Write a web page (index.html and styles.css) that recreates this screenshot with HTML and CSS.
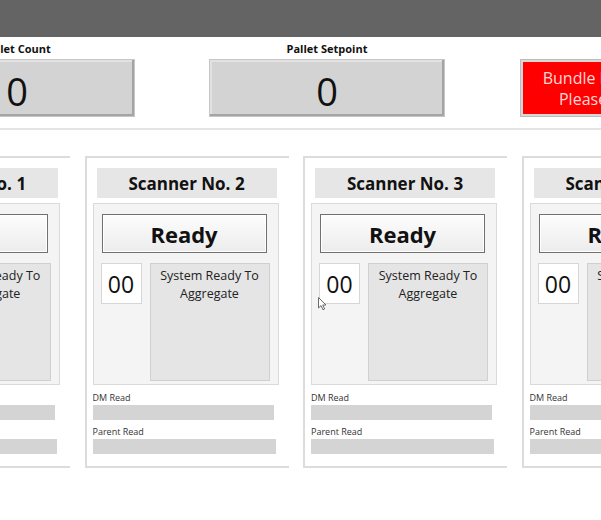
FILE: index.html
```html
<!DOCTYPE html>
<html>
<head>
<meta charset="utf-8">
<link rel="stylesheet" href="styles.css">
</head>
<body>
<div class="page">
  <div class="header"></div>
  <div class="top">
    <div class="stat">
      <div class="stat-label">Pallet Count</div>
      <div class="stat-box">0</div>
    </div>
    <div class="stat">
      <div class="stat-label">Pallet Setpoint</div>
      <div class="stat-box">0</div>
    </div>
    <div class="stat stat-alarm">
      <div class="stat-label"></div>
      <div class="stat-box alarm">Bundle Pallet Is Complete<br>Please Remove Pallet</div>
    </div>
  </div>
  <div class="divider"></div>
  <div class="cards">
    <div class="card">
      <div class="card-title">Scanner No. 1</div>
      <div class="panel">
        <div class="ready">Ready</div>
        <div class="status-row">
          <div class="count">00</div>
          <div class="message">System Ready To Aggregate</div>
        </div>
      </div>
      <div class="read-label">DM Read</div>
      <div class="read-bar dm"></div>
      <div class="read-label parent-label">Parent Read</div>
      <div class="read-bar parent"></div>
    </div>
    <div class="card">
      <div class="card-title">Scanner No. 2</div>
      <div class="panel">
        <div class="ready">Ready</div>
        <div class="status-row">
          <div class="count">00</div>
          <div class="message">System Ready To Aggregate</div>
        </div>
      </div>
      <div class="read-label">DM Read</div>
      <div class="read-bar dm"></div>
      <div class="read-label parent-label">Parent Read</div>
      <div class="read-bar parent"></div>
    </div>
    <div class="card">
      <div class="card-title">Scanner No. 3</div>
      <div class="panel">
        <div class="ready">Ready</div>
        <div class="status-row">
          <div class="count">00</div>
          <div class="message">System Ready To Aggregate</div>
        </div>
      </div>
      <div class="read-label">DM Read</div>
      <div class="read-bar dm"></div>
      <div class="read-label parent-label">Parent Read</div>
      <div class="read-bar parent"></div>
      <svg class="cursor" width="10" height="14" viewBox="0 0 10 14"><path d="M0.5 0.5 L0.5 11 L3 8.6 L5 12.8 L6.6 12 L4.7 8 L8 8 Z" fill="#ffffff" stroke="#6a6a6a" stroke-width="1" stroke-linejoin="round"/></svg>
    </div>
    <div class="card">
      <div class="card-title">Scanner No. 4</div>
      <div class="panel">
        <div class="ready">Ready</div>
        <div class="status-row">
          <div class="count">00</div>
          <div class="message">System Ready To Aggregate</div>
        </div>
      </div>
      <div class="read-label">DM Read</div>
      <div class="read-bar dm"></div>
      <div class="read-label parent-label">Parent Read</div>
      <div class="read-bar parent"></div>
    </div>
  </div>
</div>
</body>
</html>
```

FILE: styles.css
```css
html, body {
  margin: 0;
  padding: 0;
  overflow: hidden;
  background: #ffffff;
  font-family: "Open Sans", "Noto Sans", sans-serif;
  color: #111111;
}

.page {
  width: 601px;
  height: 520px;
  overflow: hidden;
  position: relative;
}

.header {
  height: 37px;
  background: #646464;
}

.top {
  display: grid;
  grid-template-columns: 236px 236px 236px;
  column-gap: 74px;
  margin-left: -101px;
  padding-top: 4px;
  width: max-content;
}

.stat {
  display: flex;
  flex-direction: column;
  align-items: center;
}

.stat-alarm {
  margin-left: 2px;
}

.stat-label {
  font-size: 11px;
  font-weight: 700;
  line-height: 16px;
  height: 18px;
  color: #111111;
  white-space: nowrap;
}

.stat-box {
  width: 236px;
  height: 58px;
  box-sizing: border-box;
  background: #d3d3d3;
  border: 1px solid #c6c6c6;
  box-shadow: inset -2px -2px 0 #a4a4a4, inset 2px 2px 0 #e2e2e2;
  display: flex;
  align-items: center;
  justify-content: center;
  font-size: 38px;
  padding-top: 5px;
  color: #111111;
}

.stat-box.alarm {
  background: #ff0000;
  border: 1px solid #bdbdbd;
  box-shadow: inset 0 0 0 2px #d8d8d8;
  color: #ffd8d8;
  font-size: 16px;
  line-height: 21px;
  text-align: center;
  white-space: nowrap;
  padding-top: 2px;
}

.divider {
  height: 2px;
  background: #e4e4e4;
  margin-top: 11px;
}

.cards {
  display: flex;
  gap: 14.5px;
  margin-left: -134px;
  margin-top: 26px;
  width: max-content;
}

.card {
  position: relative;
  width: 204px;
  height: 312px;
  box-sizing: border-box;
  border-top: 2px solid #dcdcdc;
  border-left: 2px solid #dcdcdc;
  border-bottom: 2px solid #dcdcdc;
  background: #ffffff;
}

.card-title {
  margin: 10px 0 0 10px;
  width: 180px;
  height: 30px;
  background: #e6e6e6;
  display: flex;
  align-items: center;
  justify-content: center;
  font-size: 17px;
  font-weight: 700;
  color: #111111;
}

.panel {
  margin: 5px 0 0 6px;
  width: 186px;
  height: 182px;
  box-sizing: border-box;
  border: 1px solid #dadada;
  background: #f4f4f4;
  padding: 10px 0 0 7px;
}

.ready {
  margin-left: 1px;
  width: 165px;
  height: 39px;
  box-sizing: border-box;
  border: 1px solid #707070;
  background: linear-gradient(#fdfdfd, #ececec);
  box-shadow: inset 0 0 0 1px #ffffff;
  display: flex;
  align-items: center;
  justify-content: center;
  font-size: 22px;
  font-weight: 700;
  color: #111111;
}

.status-row {
  display: flex;
  gap: 8px;
  margin-top: 10px;
}

.count {
  width: 41px;
  height: 41px;
  box-sizing: border-box;
  background: #ffffff;
  border: 1px solid #d6d6d6;
  display: flex;
  align-items: center;
  justify-content: center;
  font-size: 23px;
  color: #111111;
}

.message {
  width: 120px;
  height: 118px;
  box-sizing: border-box;
  background: #e5e5e5;
  border: 1px solid #d0d0d0;
  font-size: 12.5px;
  line-height: 18px;
  text-align: center;
  padding: 3px 4px 0;
  color: #222222;
}

.read-label {
  margin: 7px 0 0 6px;
  font-size: 9px;
  line-height: 12px;
  color: #333333;
}

.read-label.parent-label {
  margin-top: 6px;
}

.read-bar {
  margin: 1px 0 0 6px;
  height: 15px;
  background: #d4d4d4;
}

.read-bar.dm {
  width: 181px;
}

.read-bar.parent {
  width: 183px;
}

.cursor {
  position: absolute;
  left: 13px;
  top: 139px;
}
```
